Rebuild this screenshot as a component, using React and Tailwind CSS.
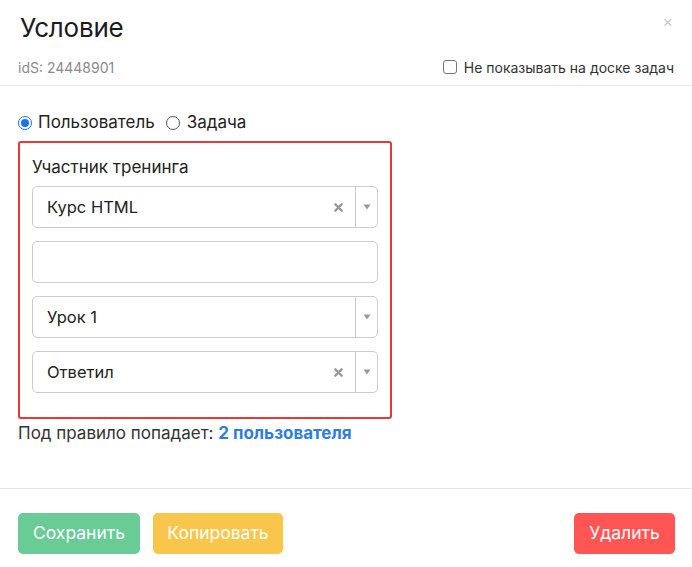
import React from "react";

const Caret = () => (
  <svg width="8" height="6" viewBox="0 0 8 6" className="fill-[#999]">
    <path d="M0.5 0.5 L7.5 0.5 L4 5.5 Z" />
  </svg>
);

const Clear = () => (
  <svg width="9" height="9" viewBox="0 0 10 10" className="stroke-[#999]" strokeWidth="2.6" strokeLinecap="round">
    <path d="M1.5 1.5 L8.5 8.5 M8.5 1.5 L1.5 8.5" />
  </svg>
);

const Select = ({ value, clearable }) => (
  <div className="flex h-[42px] items-stretch rounded-[5px] border border-[#cccccc] bg-white">
    <div className="flex flex-1 items-center pl-[14px] text-[16.5px] text-[#222]">{value}</div>
    {clearable && (
      <div className="flex w-[28px] items-center justify-center pr-[6px]">
        <Clear />
      </div>
    )}
    <div className="w-px bg-[#cccccc]" />
    <div className="flex w-[21px] items-center justify-center">
      <Caret />
    </div>
  </div>
);

export default function App() {
  return (
    <div className="relative h-[567px] w-[692px] bg-white font-['Inter','Noto_Sans',sans-serif] text-[#222]">
      {/* header */}
      <div className="border-b border-[#e6e6e6] px-5 pt-3 pb-2">
        <h1 className="text-[26px] leading-8 font-normal tracking-[-0.2px] text-[#1c1c1c]">Условие</h1>
        <div className="mt-[13px] flex h-5 items-center justify-between">
          <span className="-ml-0.5 text-[14px] text-[#8a8a8a]">idS: 24448901</span>
          <label className="-mr-0.5 flex items-center gap-[7px] text-[14px] text-[#333]">
            <span className="h-[14px] w-[14px] rounded-[3px] border border-[#777] bg-white" />
            Не показывать на доске задач
          </label>
        </div>
      </div>
      <button className="absolute top-[13px] right-[19px] text-[16px] leading-none text-[#c8c8c8]">×</button>

      {/* body */}
      <div className="px-[18px] pt-[25px]">
        <div className="flex h-6 items-center text-[17px] text-[#222]">
          <span className="flex h-[14px] w-[14px] items-center justify-center rounded-full border border-[#1a73e8] bg-white">
            <span className="h-[8px] w-[8px] rounded-full bg-[#1a73e8]" />
          </span>
          <span className="ml-[6px]">Пользователь</span>
          <span className="ml-[11px] h-[14px] w-[14px] rounded-full border border-[#555] bg-white" />
          <span className="ml-[7px]">Задача</span>
        </div>

        <div className="mt-[6px] w-[374px] rounded-[3px] border-2 border-[#e53935] px-3 pt-3 pb-6">
          <div className="h-6 text-[17px] leading-6 text-[#222]">Участник тренинга</div>
          <div className="mt-[7px] flex flex-col gap-[13px]">
            <Select value="Курс HTML" clearable />
            <div className="h-[42px] rounded-[5px] border border-[#cccccc] bg-white" />
            <Select value="Урок 1" />
            <Select value="Ответил" clearable />
          </div>
        </div>

        <div className="mt-[2px] h-6 text-[17px] leading-6 text-[#333]">
          Под правило попадает: <span className="font-bold text-[#2f7de1]">2 пользователя</span>
        </div>
      </div>

      {/* footer */}
      <div className="mt-[43px] flex items-center justify-between border-t border-[#e6e6e6] pt-6 pr-[17px] pl-[18px]">
        <div className="flex gap-[13px]">
          <button className="h-[41px] w-[122px] rounded-[5px] bg-[#69cb96] text-[17.5px] text-white">Сохранить</button>
          <button className="h-[41px] w-[130px] rounded-[5px] bg-[#f7c64a] text-[17.5px] text-white">Копировать</button>
        </div>
        <button className="h-[41px] w-[101px] rounded-[5px] bg-[#ff5555] text-[17.5px] text-white">Удалить</button>
      </div>
    </div>
  );
}
